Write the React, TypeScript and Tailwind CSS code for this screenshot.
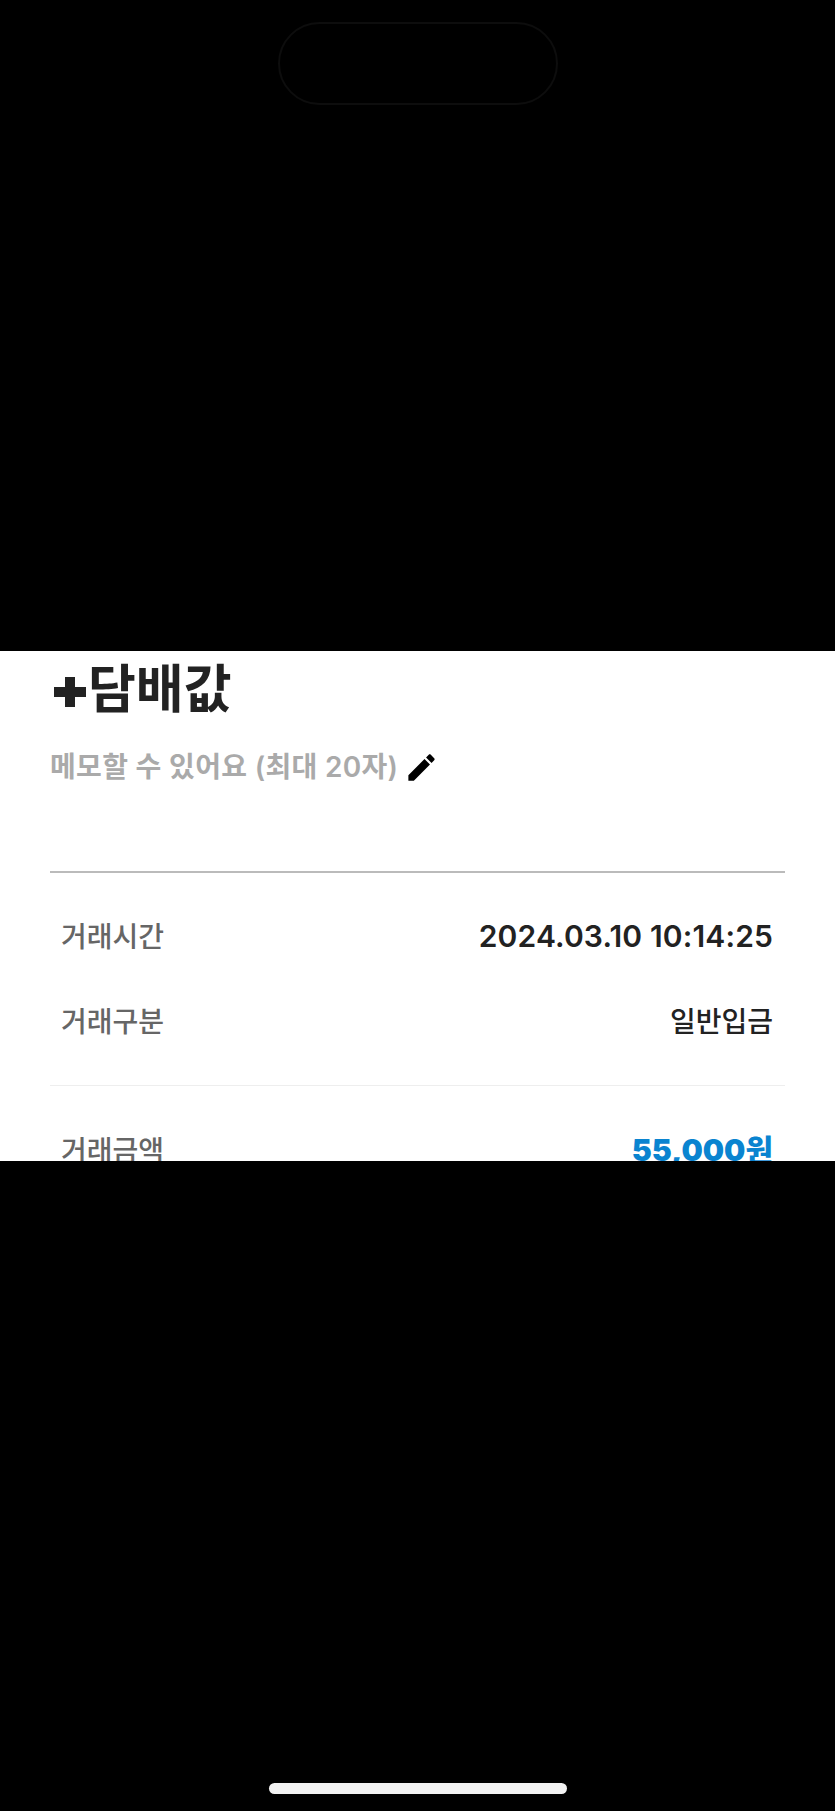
// App.tsx
const fontStack = "font-['Inter','Noto_Sans_CJK_KR',sans-serif]";

function Row({ label, children }: { label: string; children: React.ReactNode }) {
  return (
    <div className="flex items-center justify-between h-[39px] pl-[11px] pr-[12px]">
      <span className="text-[28px] text-[#666666] font-medium">{label}</span>
      {children}
    </div>
  );
}

export default function App() {
  return (
    <div className={`${fontStack} w-full h-[1811px] bg-black flex flex-col overflow-hidden`}>
      {/* status area */}
      <div className="h-[651px] pt-[22px] flex justify-center">
        <div className="w-[280px] h-[83px] rounded-full border-[2px] border-[#0d0d0d]" />
      </div>

      {/* visible part of the detail sheet */}
      <div className="h-[510px] bg-white overflow-hidden px-[50px]">
        <h1 className="mt-[9px] h-[60px] flex items-center text-[52px] leading-none font-bold text-[#222222]">
          <svg width="32" height="32" viewBox="0 0 32 32" className="ml-[4px] mr-[2px] mt-[4px]" fill="#222222">
            <path d="M11 1h10v10h11v10H21v10H11V21H0V11h11z" />
          </svg>
          담배값
        </h1>
        <div className="mt-[32px] flex items-center h-[30px]">
          <span className="text-[28px] font-semibold text-[#aaaaaa] tracking-[0.32px] whitespace-nowrap">
            메모할 수 있어요 (최대 20자)
          </span>
          <svg width="35" height="35" viewBox="0 0 24 24" className="ml-[6px]" fill="#000000">
            <path d="M3 17.25V21h3.75L17.81 9.94l-3.75-3.75L3 17.25zM20.71 7.04c.39-.39.39-1.02 0-1.41l-2.34-2.34c-.39-.39-1.02-.39-1.41 0l-1.83 1.83 3.75 3.75 1.83-1.83z" />
          </svg>
        </div>
        <div className="mt-[89px] h-[2px] bg-[#bbbbbb]" />

        <div className="mt-[44px] flex flex-col gap-[46px]">
          <Row label="거래시간">
            <span className="text-[30px] font-semibold text-[#222222] tracking-[0.15px] whitespace-nowrap">2024.03.10 10:14:25</span>
          </Row>
          <Row label="거래구분">
            <span className="text-[28px] font-medium text-[#222222]">일반입금</span>
          </Row>
        </div>

        <div className="mt-[44px] h-[1px] bg-[#eeeeee]" />

        <div className="mt-[45px]">
          <Row label="거래금액">
            <span className="text-[30px] font-black text-[#0a84d0] whitespace-nowrap">55,000원</span>
          </Row>
        </div>
      </div>

      {/* home indicator */}
      <div className="flex-1 pt-[622px] flex justify-center">
        <div className="w-[298px] h-[11px] rounded-full bg-[#f2f2f2]" />
      </div>
    </div>
  );
}
